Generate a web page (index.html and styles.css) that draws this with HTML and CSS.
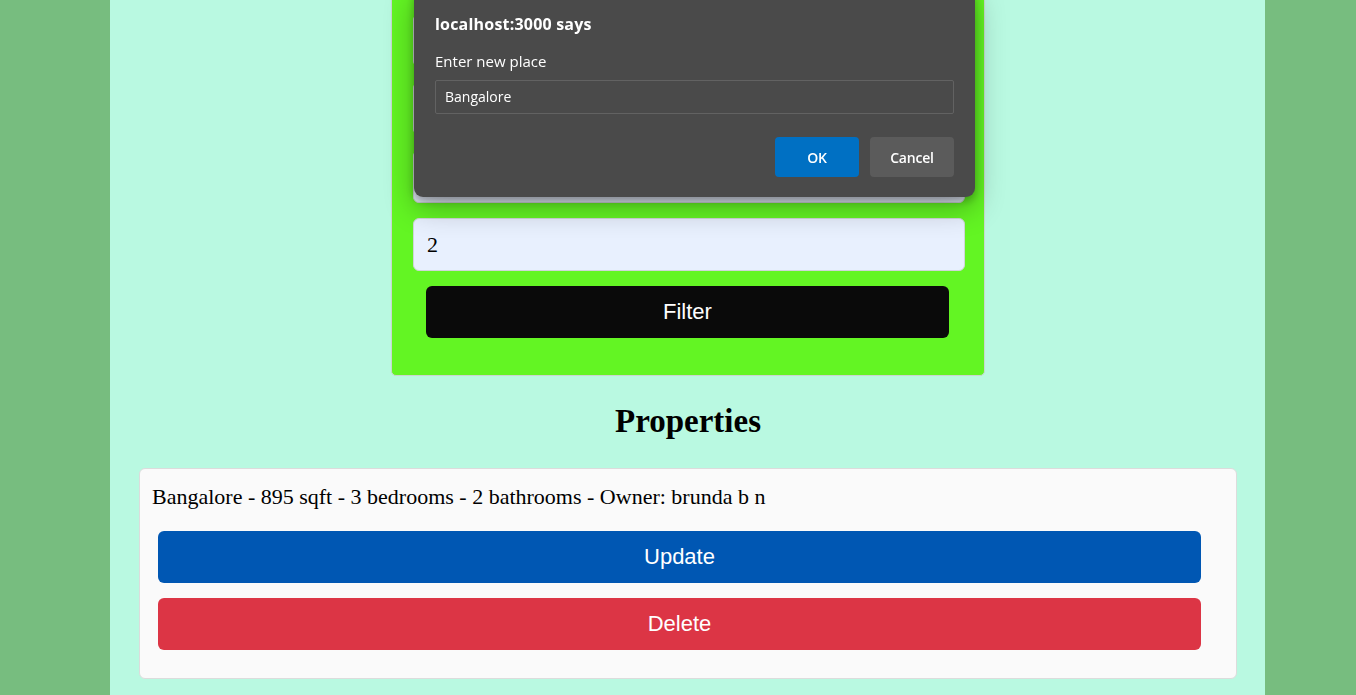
FILE: index.html
```html
<!DOCTYPE html>
<html lang="en">
<head>
<meta charset="utf-8">
<title>Properties</title>
<link rel="stylesheet" href="styles.css">
</head>
<body>
<div class="app">
  <form class="filter-box">
    <input class="field" type="text" value="">
    <input class="field" type="text" value="">
    <input class="field" type="text" value="">
    <input class="field" type="text" value="">
    <input class="field" type="text" value="2">
    <button type="button" class="filter-btn">Filter</button>
  </form>
  <h1 class="title">Properties</h1>
  <div class="card">
    <div class="card-text">Bangalore - 895 sqft - 3 bedrooms - 2 bathrooms - Owner: brunda b n</div>
    <div class="card-actions">
      <button type="button" class="btn btn-update">Update</button>
      <button type="button" class="btn btn-delete">Delete</button>
    </div>
  </div>
</div>
<div class="dialog">
  <div class="dialog-title">localhost:3000 says</div>
  <div class="dialog-msg">Enter new place</div>
  <div class="dialog-input">Bangalore</div>
  <div class="dialog-buttons">
    <span class="dbtn dbtn-ok">OK</span>
    <span class="dbtn dbtn-cancel">Cancel</span>
  </div>
</div>
</body>
</html>
```
FILE: styles.css
```css
html, body {
  margin: 0;
  padding: 0;
  height: 100%;
  overflow: hidden;
}
body {
  background: #77bd7f;
  font-family: "Liberation Serif", serif;
}
.app {
  margin-left: 110px;
  width: 1155px;
  min-height: 100%;
  box-sizing: border-box;
  background: #b9f9e1;
  padding: 0 28px 0 29px;
  display: flex;
  flex-direction: column;
  align-items: center;
}
.filter-box {
  margin-top: -55px;
  width: 594px;
  box-sizing: border-box;
  background: #63f523;
  border: 1px solid #c9d6cf;
  border-radius: 5px;
  padding: 0 19px 37px 21px;
  display: flex;
  flex-direction: column;
  gap: 15px;
}
.field {
  height: 53px;
  box-sizing: border-box;
  border: 1px solid #cfd5d8;
  border-radius: 6px;
  background: #e8f0fe;
  padding: 0 13px;
  font-family: "Liberation Serif", serif;
  font-size: 22px;
  color: #000;
}
.filter-btn {
  margin-left: 13px;
  width: 523px;
  height: 52px;
  border: none;
  border-radius: 6px;
  background: #0a0a0a;
  color: #fff;
  font-family: "Liberation Sans", Arial, sans-serif;
  font-size: 22px;
}
.title {
  margin: 27px 0 28px;
  font-size: 33px;
  font-weight: bold;
  line-height: 37px;
}
.card {
  align-self: stretch;
  background: #fafafa;
  border: 1px solid #dcdcdc;
  border-radius: 6px;
  padding: 15px 12px 28px;
}
.card-text {
  font-size: 22px;
  line-height: 25px;
}
.card-actions {
  margin: 22px 23px 0 6px;
  display: flex;
  flex-direction: column;
  gap: 15px;
}
.btn {
  height: 52px;
  border: none;
  border-radius: 6px;
  color: #fff;
  font-family: "Liberation Sans", Arial, sans-serif;
  font-size: 22px;
}
.btn-update { background: #0057b3; }
.btn-delete { background: #dc3545; }

.dialog {
  position: fixed;
  left: 414px;
  top: -10px;
  width: 561px;
  box-sizing: border-box;
  background: #4a4a4a;
  border-radius: 0 0 9px 9px;
  box-shadow: 0 4px 8px rgba(0, 0, 0, 0.25), 0 10px 30px rgba(0, 0, 0, 0.3);
  padding: 23px 21px 20px;
  font-family: "Open Sans", "Noto Sans", sans-serif;
  color: #fff;
}
.dialog-title {
  font-size: 16px;
  font-weight: 700;
  line-height: 22px;
  letter-spacing: 0.2px;
}
.dialog-msg {
  margin-top: 16px;
  font-size: 15px;
  line-height: 20px;
}
.dialog-input {
  margin-top: 9px;
  height: 34px;
  box-sizing: border-box;
  border: 1px solid #626262;
  border-radius: 2px;
  padding: 0 9px;
  font-size: 14px;
  line-height: 32px;
}
.dialog-buttons {
  margin-top: 23px;
  display: flex;
  justify-content: flex-end;
  gap: 11px;
}
.dbtn {
  width: 84px;
  height: 40px;
  border-radius: 4px;
  display: flex;
  align-items: center;
  justify-content: center;
  font-size: 14px;
  font-weight: 600;
  letter-spacing: -0.2px;
}
.dbtn-ok { background: #0070c3; }
.dbtn-cancel { background: #5b5b5b; }
```
